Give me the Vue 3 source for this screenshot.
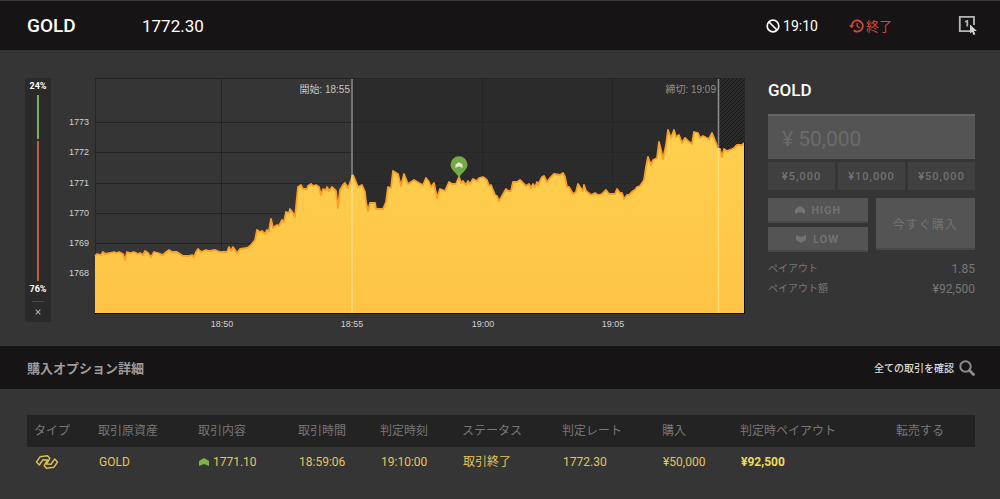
<script setup>
import { ref } from 'vue'

const amount = ref('¥ 50,000')
const presets = ['¥5,000', '¥10,000', '¥50,000']

const rates = [
  { label: '1773', y: 122 },
  { label: '1772', y: 152 },
  { label: '1771', y: 183 },
  { label: '1770', y: 213 },
  { label: '1769', y: 243 },
  { label: '1768', y: 273 },
]
const times = [
  { label: '18:50', x: 222 },
  { label: '18:55', x: 352 },
  { label: '19:00', x: 483 },
  { label: '19:05', x: 613 },
]

const line =
  '95,256 97,254 101,255 103,252 105,254 110,253 114,252 116,253 119,252 123,254 125,260 127,252 130,253 134,252 138,254 140,253 143,255 145,251 148,253 151,257 154,252 158,253 163,255 165,253 169,250 172,252 177,252 183,256 189,256 192,255 194,257 196,252 198,249 201,252 206,250 210,251 215,250 220,252 227,252 229,247 231,251 233,247 237,253 240,249 247,248 250,246 255,240 257,230 260,232 262,231 265,234 267,230 269,231 271,219 273,228 277,225 279,226 282,220 284,222 286,212 289,213 290,209 293,213 295,217 298,187 301,185 303,189 307,189 308,186 311,184 313,186 316,185 319,187 321,195 323,189 326,190 327,187 329,191 332,187 336,191 338,208 340,190 343,185 345,183 348,188 350,183 353,175 356,182 358,187 362,185 365,192 366,202 368,211 370,203 373,203 375,203 376,209 383,209 386,202 388,187 391,188 393,171 398,174 401,186 404,174 408,184 414,180 419,183 423,185 426,178 429,182 431,187 434,183 437,198 440,189 445,191 449,182 452,184 456,184 459,177 461,183 463,181 466,185 468,181 470,184 473,179 477,181 479,178 483,177 487,180 489,186 491,185 495,195 497,196 499,201 502,196 506,189 508,191 511,191 513,182 517,182 520,180 522,182 526,186 529,184 531,188 533,184 535,187 537,182 538,185 542,177 544,176 547,182 550,178 554,174 560,175 563,173 565,177 567,187 569,187 573,194 576,192 578,184 580,187 583,191 584,185 586,191 591,195 595,193 598,195 602,194 606,190 609,194 615,194 617,189 620,193 622,193 624,199 627,195 629,195 633,191 635,190 637,187 640,186 644,180 646,167 648,157 651,165 653,160 657,158 659,142 661,150 663,159 666,145 668,130 671,138 674,130 676,137 679,135 682,143 685,138 688,141 692,144 694,132 698,133 700,138 703,136 709,139 712,133 714,138 718,148 720,149 722,157 724,149 727,151 732,149 734,148 737,145 742,145 744,143'
const area = `${line} 744,313 95,313`
</script>

<template>
  <div class="app">
    <header class="top">
      <h1 class="asset">GOLD</h1>
      <span class="price">1772.30</span>
      <div class="stat expiry">
        <svg width="14" height="14" viewBox="0 0 14 14" aria-hidden="true">
          <circle cx="7" cy="7" r="5.8" fill="none" stroke="currentColor" stroke-width="1.7" />
          <path d="M3 3l8 8" stroke="currentColor" stroke-width="1.7" />
        </svg>
        <span>19:10</span>
      </div>
      <div class="stat ended">
        <svg width="15" height="14" viewBox="0 0 15 14" fill="none" stroke="currentColor" aria-hidden="true">
          <path d="M2.6 7.4A5.6 5.6 0 1 1 4.6 11.3" stroke-width="1.8" />
          <path d="M8.2 3.8v3.6l2.6 1.6" stroke-width="1.3" />
          <path d="M0 6.2h5.2L2.6 9.2z" fill="currentColor" stroke="none" />
        </svg>
        <span>終了</span>
      </div>
      <button class="icon-btn one-click" aria-label="ワンクリック">
        <svg width="20" height="21" viewBox="0 0 20 21" aria-hidden="true">
          <path d="M16 10V1.8H1.8v14.4H12" fill="none" stroke="#b5b5b5" stroke-width="1.8" />
          <path d="M6.9 6.1L9 5h1.2v6.5H8.4V6.9l-1.5.6z" fill="#b5b5b5" />
          <path d="M12 9.6v9l2.1-1.9 1.4 3.4 1.9-.8-1.4-3.3h2.9z" fill="#d2d2d2" />
        </svg>
      </button>
    </header>

    <main class="trade">
      <aside class="gauge">
        <span class="pct">24%</span>
        <div class="bar">
          <i class="up"></i>
          <i class="down"></i>
        </div>
        <span class="pct">76%</span>
        <span class="rule"></span>
        <button class="icon-btn close" aria-label="閉じる">
          <svg width="6" height="6" viewBox="0 0 6 6" aria-hidden="true">
            <path d="M.7.7l4.6 4.6M5.3.7L.7 5.3" stroke="#a8a8a8" stroke-width="1.1" />
          </svg>
        </button>
      </aside>

      <svg class="chart" viewBox="62 78 695 254" role="img" aria-label="GOLD">
        <defs>
          <linearGradient id="gold" x1="0" y1="0" x2="0" y2="1">
            <stop offset="0" stop-color="#ffd04f" />
            <stop offset="1" stop-color="#fec445" />
          </linearGradient>
          <pattern id="hatch" width="4" height="4" patternUnits="userSpaceOnUse">
            <rect width="4" height="4" fill="#2b2b2b" />
            <path d="M-1 1l2-2M0 4l4-4M3 5l2-2" stroke="#171717" stroke-width="1" />
          </pattern>
        </defs>
        <rect x="352" y="78" width="366" height="235" fill="#2b2b2b" />
        <rect x="719" y="78" width="25" height="235" fill="url(#hatch)" />
        <g stroke="#252525">
          <path d="M95 78.5H744M95.5 78V313M744.5 78V313" />
          <path v-for="r in rates" :key="r.label" :d="`M95 ${r.y}.5H718`" />
          <path v-for="t in times" :key="t.label" :d="`M${t.x - 1}.5 78V313`" />
        </g>
        <polygon :points="area" fill="url(#gold)" />
        <polyline :points="line" fill="none" stroke="#fb9f26" stroke-width="1.8" stroke-linejoin="round" />
        <path d="M95 313.5H745M744.5 143V314" stroke="#0d0d0d" />
        <path d="M352 79V175M718.5 79V148" stroke="#8f8f8f" stroke-width="1.5" />
        <path d="M352 175V313M718.5 148V313" stroke="#ffdc7c" stroke-width="1.5" />
        <path d="M459 178c-2-5-8.5-8-8.500-13.300a8.500 8.500 0 0 1 17 0c0 5.300-6.500 8.300-8.500 13.300z" fill="#76a845" />
        <path d="M455.500 168v-3.500l3.500-2.200 3.500 2.200v3.500l-3.500-1.800z" fill="#e4ecd9" />
        <g class="axis">
          <text v-for="r in rates" :key="r.label" x="89" :y="r.y + 3" text-anchor="end">{{ r.label }}</text>
          <text v-for="t in times" :key="t.label" :x="t.x" y="327" text-anchor="middle">{{ t.label }}</text>
        </g>
        <text class="mark" x="350" y="93" text-anchor="end">開始: 18:55</text>
        <text class="mark dim" x="716" y="93" text-anchor="end">締切: 19:09</text>
      </svg>

      <section class="order">
        <h2>GOLD</h2>
        <input v-model="amount" class="amount" type="text" aria-label="購入金額" />
        <div class="presets">
          <button v-for="p in presets" :key="p">{{ p }}</button>
        </div>
        <div class="actions">
          <button class="high">
            <svg width="10" height="8" viewBox="0 0 10 8" aria-hidden="true">
              <path d="M0 8V3l5-3 5 3v5L5 6z" fill="currentColor" />
            </svg>
            HIGH
          </button>
          <button class="low">
            <svg width="10" height="8" viewBox="0 0 10 8" aria-hidden="true">
              <path d="M0 0v5l5 3 5-3V0L5 2z" fill="currentColor" />
            </svg>
            LOW
          </button>
          <button class="buy">今すぐ購入</button>
        </div>
        <dl class="payout">
          <dt>ペイアウト</dt>
          <dd>1.85</dd>
          <dt>ペイアウト額</dt>
          <dd>¥92,500</dd>
        </dl>
      </section>
    </main>

    <div class="details-head">
      <h2>購入オプション詳細</h2>
      <a href="#">
        全ての取引を確認
        <svg width="16" height="16" viewBox="0 0 16 16" fill="none" stroke="#8c8c8c" aria-hidden="true">
          <circle cx="6.500" cy="6.500" r="5.200" stroke-width="2" />
          <path d="M10.500 10.500l4 4" stroke-width="2.800" stroke-linecap="round" />
        </svg>
      </a>
    </div>

    <div class="details">
      <table>
        <colgroup>
          <col class="c-type" /><col class="c-wide" /><col class="c-wide" /><col class="c-time" /><col class="c-time" />
          <col class="c-wide" /><col class="c-wide" /><col class="c-buy" /><col class="c-payout" /><col />
        </colgroup>
        <thead>
          <tr>
            <th>タイプ</th>
            <th>取引原資産</th>
            <th>取引内容</th>
            <th>取引時間</th>
            <th>判定時刻</th>
            <th>ステータス</th>
            <th>判定レート</th>
            <th>購入</th>
            <th>判定時ペイアウト</th>
            <th>転売する</th>
          </tr>
        </thead>
        <tbody>
          <tr>
            <td>
              <svg class="type" width="24" height="16" viewBox="0 0 24 16" fill="none" stroke="#d9bb52" stroke-width="1.500" stroke-linejoin="round" aria-hidden="true">
                <path d="M1.500 8L5 2.800l7.500-1 2.300 2.500-3.300 5.700 4.500.2L19.700 5l2.800 3-3.500 5.200-7.500 1-2.300-2.500L12.500 6 8 5.800 4.300 11z" />
              </svg>
            </td>
            <td>GOLD</td>
            <td>
              <svg class="dir" width="10" height="8" viewBox="0 0 10 8" aria-hidden="true">
                <path d="M0 8V3l5-3 5 3v5L5 6z" fill="#7cb342" />
              </svg>
              1771.10
            </td>
            <td>18:59:06</td>
            <td>19:10:00</td>
            <td>取引終了</td>
            <td>1772.30</td>
            <td>¥50,000</td>
            <td class="strong">¥92,500</td>
            <td></td>
          </tr>
        </tbody>
      </table>
    </div>
  </div>
</template>

<style>
body {
  background: #353535;
}
</style>

<style scoped>
.app {
  border-top: 1px solid #3a3a3a;
  background: #353535;
  color: #fff;
  font-family: Roboto, "Noto Sans CJK JP", sans-serif;
  font-size: 12px;
}
.app *,
.app {
  box-sizing: border-box;
}
h1,
h2,
dl,
dd {
  margin: 0;
}
button,
input {
  border: 0;
  border-radius: 0;
  padding: 0;
  font: inherit;
}
svg {
  display: block;
  flex: none;
}
.icon-btn {
  background: none;
}
.top {
  display: flex;
  align-items: center;
  height: 49px;
  padding: 0 22px 0 27px;
  background: #161415;
}
.asset {
  width: 115px;
  font-size: 19px;
  font-weight: 500;
}
.price {
  font-size: 17px;
}
.stat {
  display: flex;
  align-items: center;
  gap: 3px;
  font-size: 14px;
}
.expiry {
  margin-left: auto;
}
.ended {
  margin-left: 31px;
  gap: 2px;
  color: #d5483a;
  font-size: 13px;
}
.one-click {
  margin-left: 66px;
}
.trade {
  display: flex;
  align-items: flex-start;
  gap: 11px;
  height: 296px;
  padding: 28px 25px 0;
}
.gauge {
  display: flex;
  flex-direction: column;
  align-items: center;
  width: 26px;
  height: 244px;
  background: #2a2a2a;
}
.pct {
  font-size: 9px;
  font-weight: 700;
  line-height: 17px;
}
.bar {
  display: flex;
  flex: 1;
  flex-direction: column;
  gap: 2px;
  width: 2px;
}
.up {
  flex: 24;
  background: #7fae55;
}
.down {
  flex: 76;
  background: #cf5a42;
}
.rule {
  width: 12px;
  height: 1px;
  margin: 3px 0 7px;
  background: #4a4a4a;
}
.close {
  margin-bottom: 7px;
}
.chart {
  flex: 1;
  min-width: 0;
}
.axis text {
  fill: #d0d0d0;
  font-family: "Liberation Sans", Arial, sans-serif;
  font-size: 9px;
}
.mark {
  fill: #c4c4c4;
  font-family: "Liberation Sans", "Noto Sans CJK JP", sans-serif;
  font-size: 10px;
}
.dim {
  fill: #8d8d8d;
}
.order {
  width: 207px;
}
.order h2 {
  margin-bottom: 11px;
  font-size: 17px;
  font-weight: 500;
  line-height: 25px;
}
.amount {
  display: block;
  width: 100%;
  height: 45px;
  padding: 2px 14px 0;
  border-top: 2px solid #646464;
  background: #545454;
  color: #6b6b6b;
  font-size: 21px;
}
.presets {
  display: grid;
  grid-template-columns: repeat(3, 1fr);
  gap: 3px;
  margin-top: 3px;
}
.presets button {
  height: 28px;
  background: #404040;
  color: #727272;
  font-size: 11px;
  font-weight: 500;
  letter-spacing: 1px;
}
.actions {
  display: grid;
  grid-template-columns: 1fr 1fr;
  grid-template-rows: 25px 25px;
  gap: 4px 8px;
  margin-top: 8px;
}
.actions button {
  display: flex;
  align-items: center;
  justify-content: center;
  gap: 7px;
  border-bottom: 2px solid #484848;
  background: #545454;
  color: #727272;
  font-family: Inter, sans-serif;
  font-size: 10px;
  font-weight: 700;
  letter-spacing: 1px;
}
.actions .buy {
  grid-area: 1 / 2 / 3 / 3;
  height: 52px;
  font-family: "Noto Sans CJK JP", sans-serif;
  font-size: 12px;
  font-weight: 400;
}
.payout {
  display: grid;
  grid-template-columns: 1fr auto;
  margin-top: 7px;
  color: #777;
  font-size: 10px;
  line-height: 20px;
}
.payout dd {
  font-size: 12px;
  text-align: right;
}
.details-head {
  display: flex;
  align-items: center;
  justify-content: space-between;
  height: 43px;
  padding: 0 25px 0 27px;
  background: #161415;
}
.details-head h2 {
  color: #9c9c9c;
  font-size: 13px;
  font-weight: 700;
}
.details-head a {
  display: flex;
  align-items: center;
  gap: 5px;
  color: #ddd;
  font-size: 10px;
  font-weight: 500;
  text-decoration: none;
}
.details {
  padding: 26px 25px 21px 27px;
}
table {
  width: 100%;
  border-collapse: collapse;
  table-layout: fixed;
}
.c-type {
  width: 64px;
}
.c-wide {
  width: 100px;
}
.c-time {
  width: 82px;
}
.c-buy {
  width: 78px;
}
.c-payout {
  width: 156px;
}
th,
td {
  padding: 0 0 0 7px;
  text-align: left;
  white-space: nowrap;
}
th {
  height: 32px;
  background: #232323;
  color: #777;
  font-weight: 400;
  line-height: 16px;
}
td {
  height: 30px;
  padding-left: 8px;
  color: #e3c55c;
  line-height: 16px;
}
.dir {
  display: inline-block;
  margin-right: 1px;
}
.strong {
  color: #f0da5a;
  font-weight: 700;
}
</style>
